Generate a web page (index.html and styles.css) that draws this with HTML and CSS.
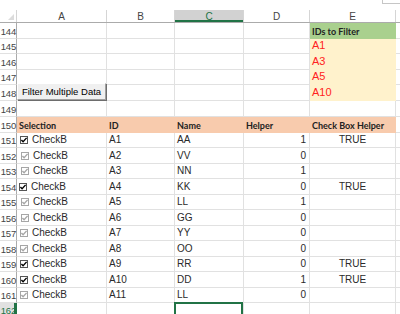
FILE: index.html
```html
<!DOCTYPE html>
<html lang="en">
<head>
  <meta charset="UTF-8" />
  <title>Filter Multiple Data</title>
  <link rel="stylesheet" href="styles.css">
</head>
<body>

  <!-- bit of the formula bar above the grid -->
  <div class="topbar">
    <div class="namebox"></div>
  </div>

  <div class="sheet">

    <!-- column letters -->
    <div class="row head-row">
      <div class="corner"><span class="tri"></span></div>
      <div class="col-head">A</div>
      <div class="col-head">B</div>
      <div class="col-head selected">C</div>
      <div class="col-head">D</div>
      <div class="col-head">E</div>
      <div class="col-head rest"></div>
    </div>

    <div class="row h16">
      <div class="num">144</div>
      <div class="cell"></div><div class="cell"></div><div class="cell"></div><div class="cell"></div>
      <div class="cell fill-green bold">IDs to Filter</div>
      <div class="cell rest"></div>
    </div>
    <div class="row h15">
      <div class="num">145</div>
      <div class="cell"></div><div class="cell"></div><div class="cell"></div><div class="cell"></div>
      <div class="cell fill-yellow red">A1</div>
      <div class="cell rest"></div>
    </div>
    <div class="row h16">
      <div class="num">146</div>
      <div class="cell"></div><div class="cell"></div><div class="cell"></div><div class="cell"></div>
      <div class="cell fill-yellow red">A3</div>
      <div class="cell rest"></div>
    </div>
    <div class="row h15">
      <div class="num">147</div>
      <div class="cell"></div><div class="cell"></div><div class="cell"></div><div class="cell"></div>
      <div class="cell fill-yellow red">A5</div>
      <div class="cell rest"></div>
    </div>
    <div class="row h16">
      <div class="num">148</div>
      <div class="cell"></div><div class="cell"></div><div class="cell"></div><div class="cell"></div>
      <div class="cell fill-yellow red">A10</div>
      <div class="cell rest"></div>
    </div>
    <div class="row h16">
      <div class="num">149</div>
      <div class="cell"></div><div class="cell"></div><div class="cell"></div><div class="cell"></div><div class="cell"></div>
      <div class="cell rest"></div>
    </div>

    <!-- table header -->
    <div class="row h16">
      <div class="num">150</div>
      <div class="cell fill-peach bold">Selection</div>
      <div class="cell fill-peach bold">ID</div>
      <div class="cell fill-peach bold">Name</div>
      <div class="cell fill-peach bold">Helper</div>
      <div class="cell fill-peach bold">Check Box Helper</div>
      <div class="cell rest"></div>
    </div>

    <div id="rows"></div>

    <div class="row h15">
      <div class="num selected">162</div>
      <div class="cell"></div><div class="cell"></div>
      <div class="cell active"></div>
      <div class="cell"></div><div class="cell"></div>
      <div class="cell rest"></div>
    </div>

    <button class="sheet-btn">Filter Multiple Data</button>
  </div>

  <script>
    const data = [
      [151, 'A1', 'AA', 1, true, true, 0],
      [152, 'A2', 'VV', 0, false, false, 1],
      [153, 'A3', 'NN', 1, false, false, 1],
      [154, 'A4', 'KK', 0, true, true, -1],
      [155, 'A5', 'LL', 1, false, false, 1],
      [156, 'A6', 'GG', 0, false, false, 1],
      [157, 'A7', 'YY', 0, false, false, 0],
      [158, 'A8', 'OO', 0, false, false, 0],
      [159, 'A9', 'RR', 0, true, true, 0],
      [160, 'A10', 'DD', 1, true, true, 0],
      [161, 'A11', 'LL', 0, false, false, 0]
    ];

    function checkbox(on) {
      const c = on ? 'on' : 'off';
      return `<svg class="cb ${c}" viewBox="0 0 8 8" width="8" height="8">
        <rect x="0.5" y="0.5" width="7" height="7" fill="#fff"/>
        <path d="M1.4 3.9 L3.1 5.7 L6.6 1.9" fill="none" stroke-width="1.4"/>
      </svg>`;
    }

    const rows = document.getElementById('rows');
    data.forEach((d, i) => {
      const [n, id, name, helper, checked, flag, shift] = d;
      const row = document.createElement('div');
      row.className = 'row ' + (i % 2 === 0 ? 'h15' : 'h16');
      row.innerHTML = `
        <div class="num">${n}</div>
        <div class="cell check-cell shift${shift}">${checkbox(checked)}<span>CheckB</span></div>
        <div class="cell">${id}</div>
        <div class="cell">${name}</div>
        <div class="cell right">${helper}</div>
        <div class="cell center">${flag ? 'TRUE' : ''}</div>
        <div class="cell rest"></div>
      `;
      rows.appendChild(row);
    });
  </script>

</body>
</html>
```

FILE: styles.css
```css
body {
  margin: 0;
  padding: 0;
  background: #fff;
  font-family: 'Liberation Sans', Arial, sans-serif;
  font-size: 10px;
  color: #2a2a2a;
  overflow: hidden;
  width: 400px;
  height: 314px;
}

.topbar {
  height: 10px;
  display: flex;
  justify-content: flex-end;
  box-sizing: border-box;
}

.namebox {
  width: 17px;
  height: 3px;
  border: 1px solid #c6c6c6;
  border-top: none;
  border-right: none;
}

.sheet {
  position: relative;
}

.row {
  display: grid;
  grid-template-columns: 17px 90px 68px 69px 66px 86px 4px;
}

.h15 { height: 15px; }
.h16 { height: 16px; }

.head-row {
  border-bottom: 1px solid #ababab;
  height: 12px;
}

.corner {
  border-right: 1px solid #d5d5d5;
  position: relative;
}

.corner .tri {
  position: absolute;
  right: 2px;
  bottom: 2px;
  width: 0;
  height: 0;
  border-left: 6px solid transparent;
  border-bottom: 6px solid #dcdcdc;
}

.col-head {
  display: flex;
  justify-content: center;
  align-items: center;
  color: #444;
  font-size: 10px;
  border-right: 1px solid #d5d5d5;
}

.col-head.selected {
  background: #d2d2d2;
  color: #217346;
  box-shadow: inset 0 -2px 0 #217346;
}

.col-head.rest {
  border-right: none;
}

.num {
  display: flex;
  justify-content: flex-end;
  align-items: flex-end;
  padding: 0 0 1px 0;
  box-sizing: border-box;
  color: #444;
  font-size: 9.5px;
  letter-spacing: -0.2px;
  border-right: 1px solid #ababab;
  border-bottom: 1px solid #e1e1e1;
  white-space: nowrap;
}

.num.selected {
  background: #e1e1e1;
  color: #217346;
  box-shadow: inset -2px 0 0 #217346;
  border-right-color: #217346;
}

.cell {
  display: flex;
  align-items: flex-end;
  padding: 0 2px 2px;
  box-sizing: border-box;
  border-right: 1px solid #e1e1e1;
  border-bottom: 1px solid #e1e1e1;
  white-space: nowrap;
  line-height: 1;
  position: relative;
}

.cell.rest {
  border-right: none;
}

.cell.right {
  justify-content: flex-end;
  padding-right: 3px;
}

.cell.center {
  justify-content: center;
}

.bold {
  font-family: Lato, 'Liberation Sans', sans-serif;
  font-weight: bold;
  font-size: 9px;
  color: #222;
}

.red {
  color: #f22;
  font-size: 11px;
}

.fill-green {
  background: #a9d08e;
  border-color: #a9d08e;
}

.fill-yellow {
  background: #fff2cc;
  border-color: #fff2cc;
}

.fill-peach {
  background: #f8cbad;
  border-color: #f8cbad;
}

.cell.active::after {
  content: "";
  position: absolute;
  top: -1px;
  left: -1px;
  right: 0;
  bottom: -4px;
  border: 2px solid #217346;
}

/* form check boxes sitting in column A */
.check-cell {
  align-items: center;
  padding: 0 0 0 3px;
  gap: 4px;
}

.check-cell span {
  color: #2a2a2a;
}

.shift-1 { padding-left: 2px; }
.shift1 { padding-left: 4px; }

.cb rect {
  stroke: #555;
}

.cb.on path {
  stroke: #000;
}

.cb.off rect {
  stroke: #a6a6a6;
}

.cb.off path {
  stroke: #a6a6a6;
}

.sheet-btn {
  position: absolute;
  left: 17px;
  top: 73px;
  width: 89px;
  height: 17px;
  padding: 0;
  margin: 0;
  background: #f0f0f0;
  border: 1px solid;
  border-color: #fff #a0a0a0 #a0a0a0 #fff;
  box-shadow: 1px 1px 0 #6d6d6d;
  font-family: 'Liberation Sans', Arial, sans-serif;
  font-size: 9.5px;
  color: #000;
  box-sizing: border-box;
}
```
